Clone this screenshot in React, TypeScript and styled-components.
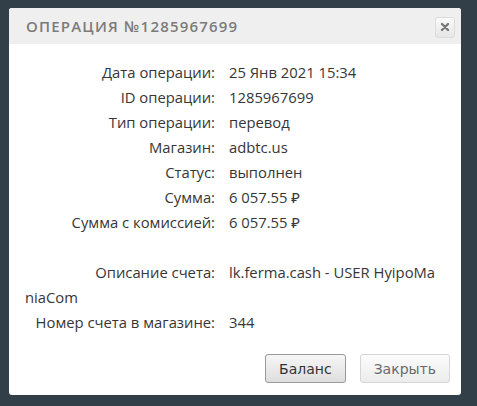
import React from "react";
import styled, { createGlobalStyle } from "styled-components";

const Global = createGlobalStyle`
  html, body { margin: 0; padding: 0; }
  body {
    background: #323f48;
    width: 477px;
    height: 406px;
    overflow: hidden;
    font-family: "Open Sans", "Noto Sans", sans-serif;
  }
`;

const Stage = styled.div`
  padding: 8px 16px 11px 9px;
  box-sizing: border-box;
  height: 406px;
`;

const Dialog = styled.div`
  width: 452px;
  height: 387px;
  background: #fff;
  border-radius: 3px;
  display: flex;
  flex-direction: column;
  overflow: hidden;
`;

const Header = styled.div`
  height: 36px;
  background: #efefef;
  display: flex;
  align-items: center;
  justify-content: space-between;
  padding: 0 6px 0 17px;
`;

const Title = styled.div`
  color: #7b7b7b;
  font-size: 15px;
  font-weight: 600;
  letter-spacing: 1.2px;
  text-transform: uppercase;
`;

const CloseBtn = styled.button`
  width: 20px;
  height: 21px;
  padding: 0;
  border: 1px solid #dcdcdc;
  border-radius: 3px;
  background: linear-gradient(#fafafa, #e6e6e6);
  display: flex;
  align-items: center;
  justify-content: center;
  margin-top: 2px;
`;

const Body = styled.div`
  flex: 1;
  padding: 16px 20px 0 16px;
  color: #363636;
  font-size: 14.8px;
  line-height: 25px;
  word-break: break-all;
`;

const Row = styled.div`
  min-height: 25px;
`;

const Label = styled.span`
  display: inline-block;
  width: 190px;
  text-align: right;
  margin-right: 14px;
  word-break: normal;
`;

const Footer = styled.div`
  display: flex;
  justify-content: flex-end;
  gap: 14px;
  padding: 0 11px 12px 0;
`;

const Button = styled.button<{ $primary?: boolean }>`
  height: 29px;
  padding: 0 13px;
  font-family: "DejaVu Sans", Verdana, sans-serif;
  font-size: 14px;
  color: ${(p) => (p.$primary ? "#333" : "#6a6a6a")};
  border: 1px solid ${(p) => (p.$primary ? "#9a9a9a" : "#d6d6d6")};
  border-radius: 3px;
  background: ${(p) =>
    p.$primary
      ? "linear-gradient(#f6f6f6, #dedede)"
      : "linear-gradient(#fcfcfc, #ececec)"};
`;

const rows: [string, string][] = [
  ["Дата операции:", "25 Янв 2021 15:34"],
  ["ID операции:", "1285967699"],
  ["Тип операции:", "перевод"],
  ["Магазин:", "adbtc.us"],
  ["Статус:", "выполнен"],
  ["Сумма:", "6 057.55 ₽"],
  ["Сумма с комиссией:", "6 057.55 ₽"],
];

export default function App() {
  return (
    <>
      <Global />
      <Stage>
        <Dialog>
          <Header>
            <Title>Операция №1285967699</Title>
            <CloseBtn aria-label="close">
              <svg width="10" height="10" viewBox="0 0 10 10">
                <path d="M2 2 L8 8 M8 2 L2 8" stroke="#777" strokeWidth="2.4" strokeLinecap="round" />
              </svg>
            </CloseBtn>
          </Header>
          <Body>
            {rows.map(([l, v]) => (
              <Row key={l}>
                <Label>{l}</Label>
                {v}
              </Row>
            ))}
            <Row />
            <Row>
              <Label>Описание счета:</Label>
              lk.ferma.cash - USER HyipoManiaCom
            </Row>
            <Row>
              <Label>Номер счета в магазине:</Label>
              344
            </Row>
          </Body>
          <Footer>
            <Button $primary>Баланс</Button>
            <Button>Закрыть</Button>
          </Footer>
        </Dialog>
      </Stage>
    </>
  );
}
